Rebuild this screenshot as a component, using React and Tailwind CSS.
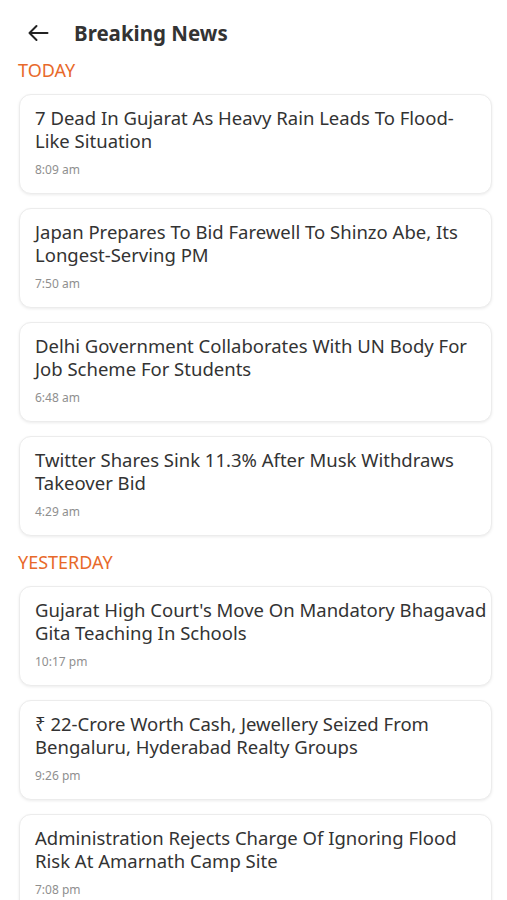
const news = [
  {
    label: "TODAY",
    items: [
      { title: "7 Dead In Gujarat As Heavy Rain Leads To Flood-Like Situation", time: "8:09 am" },
      { title: "Japan Prepares To Bid Farewell To Shinzo Abe, Its Longest-Serving PM", time: "7:50 am" },
      { title: "Delhi Government Collaborates With UN Body For Job Scheme For Students", time: "6:48 am" },
      { title: "Twitter Shares Sink 11.3% After Musk Withdraws Takeover Bid", time: "4:29 am" },
    ],
  },
  {
    label: "YESTERDAY",
    items: [
      { title: "Gujarat High Court's Move On Mandatory Bhagavad Gita Teaching In Schools", time: "10:17 pm" },
      { title: "₹ 22-Crore Worth Cash, Jewellery Seized From Bengaluru, Hyderabad Realty Groups", time: "9:26 pm" },
      { title: "Administration Rejects Charge Of Ignoring Flood Risk At Amarnath Camp Site", time: "7:08 pm" },
    ],
  },
];

const NewsCard = ({ title, time }) => (
  <div className="rounded-[12px] border border-[#ececec] bg-white pl-[15px] pr-[3px] pt-[11px] pb-[15px] shadow-[0_1px_3px_rgba(0,0,0,0.08)]">
    <p className="text-[18.5px] leading-[23px] text-[#333333]">{title}</p>
    <p className="mt-[10px] text-[12px] leading-[16px] text-[#8f8f8f]">{time}</p>
  </div>
);

export default function App() {
  return (
    <div className="min-h-screen w-[507px] overflow-hidden bg-white font-['Noto_Sans',sans-serif]">
      <div className="flex h-[58px] items-center pl-[26px] pt-[8px]">
        <svg width="25" height="24" viewBox="0 0 24 24" fill="none" stroke="#222" strokeWidth="2" strokeLinecap="round" strokeLinejoin="round">
          <path d="M21 12H3M10 5l-7 7 7 7" />
        </svg>
        <h1 className="ml-[23px] text-[20.5px] font-bold text-[#333333]">Breaking News</h1>
      </div>
      {news.map((group) => (
        <div key={group.label}>
          <div className="px-[18px] pb-[12px] text-[18px] leading-[24px] text-[#e8692a]">{group.label}</div>
          <div className="flex flex-col gap-[14px] pl-[19px] pr-[15px] pb-[14px]">
            {group.items.map((item) => (
              <NewsCard key={item.title} {...item} />
            ))}
          </div>
        </div>
      ))}
    </div>
  );
}
